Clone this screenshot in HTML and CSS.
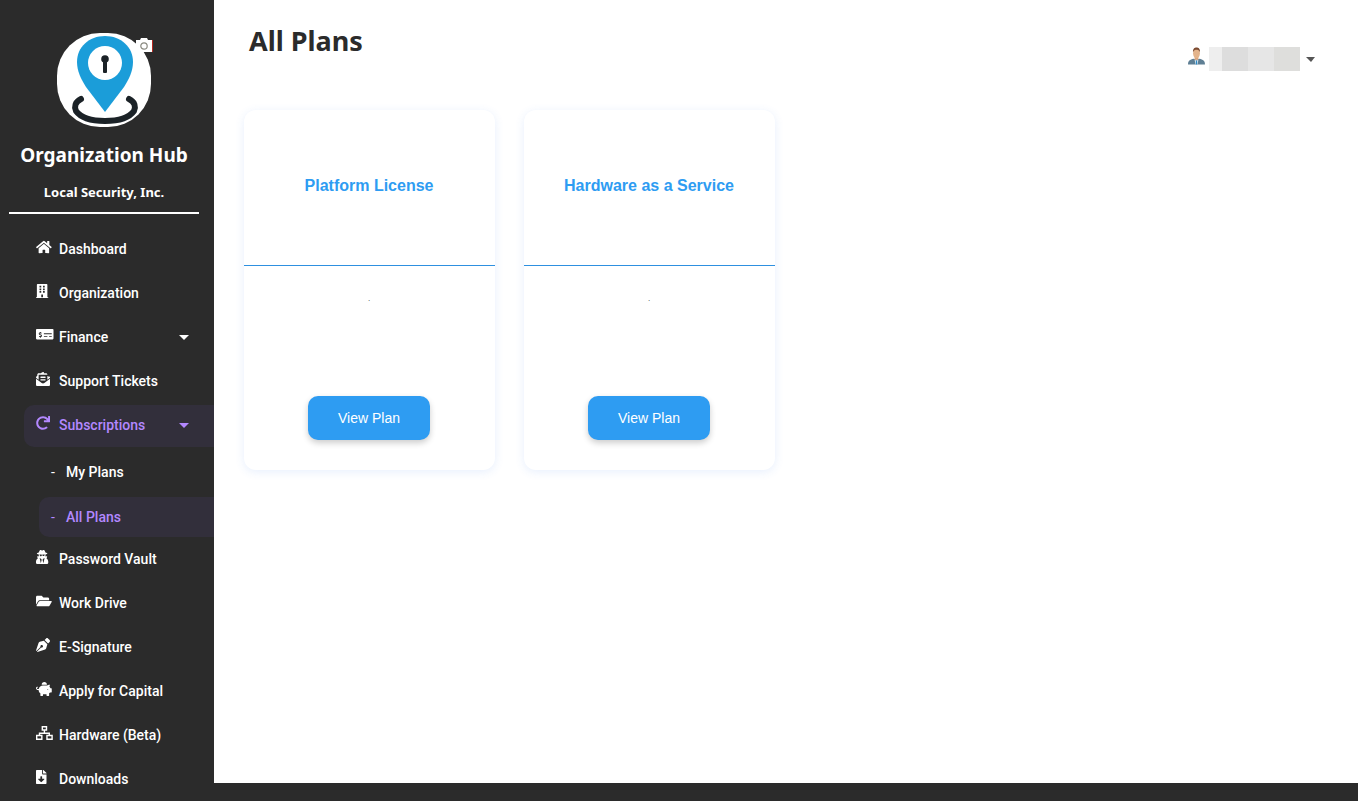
FILE: index.html
```html
<!DOCTYPE html>
<html lang="en">
<head>
<meta charset="utf-8">
<title>All Plans</title>
<link rel="stylesheet" href="styles.css">
</head>
<body>
<div class="app">
  <aside class="sidebar">
    <div class="brand">
      <div class="logo-wrap">
        <svg class="logo" viewBox="0 0 94 94">
          <rect width="94" height="94" rx="43" fill="#fff"/>
          <path d="M24 66C18 69 17 74 19 78C24 85 36 88 48 88C60 88 72 85 77 78C79 74 78 69 72 66" fill="none" stroke="#1b2227" stroke-width="6" stroke-linecap="round"/>
          <path d="M48 3C64 3 76 14 76 29C76 38 72 46 67 54L48 79L29 54C24 46 20 38 20 29C20 14 32 3 48 3Z" fill="#1b9dd9"/>
          <circle cx="48" cy="30" r="17" fill="#fff"/>
          <circle cx="48" cy="26" r="3.800" fill="#1b2227"/>
          <rect x="46" y="27" width="4" height="13" rx="1" fill="#1b2227"/>
        </svg>
        <svg class="camera" viewBox="0 0 17 14">
          <path d="M0 2h4l1-2h6l1 2h5v12H0z" fill="#fff"/>
          <rect x="16" y="2" width="1" height="12" fill="#b3261e"/>
          <circle cx="8" cy="8" r="3.200" fill="#fff" stroke="#8a8a80" stroke-width="1.200"/>
        </svg>
      </div>
      <div class="brand-name">Organization Hub</div>
      <div class="brand-org">Local Security, Inc.</div>
    </div>
    <nav class="nav">
      <a class="nav-item">
        <svg class="ico" preserveAspectRatio="xMinYMid meet" viewBox="0 0 576 512"><path d="M280.370 148.260L96 300.110V464a16 16 0 0 0 16 16l112.060-.29a16 16 0 0 0 15.920-16V368a16 16 0 0 1 16-16h64a16 16 0 0 1 16 16v95.640a16 16 0 0 0 16 16.050L464 480a16 16 0 0 0 16-16V300L295.670 148.260a12.190 12.190 0 0 0-15.300 0zM571.600 251.470L488 182.560V44.050a12 12 0 0 0-12-12h-56a12 12 0 0 0-12 12v72.610L318.470 43a48 48 0 0 0-61 0L4.340 251.470a12 12 0 0 0-1.600 16.900l25.500 31A12 12 0 0 0 45.150 301l235.220-193.740a12.190 12.190 0 0 1 15.300 0L530.900 301a12 12 0 0 0 16.900-1.600l25.500-31a12 12 0 0 0-1.700-16.930z"/></svg>
        <span>Dashboard</span>
      </a>
      <a class="nav-item">
        <svg class="ico" preserveAspectRatio="xMinYMid meet" viewBox="0 0 448 512"><path d="M436 480h-20V24c0-13.255-10.745-24-24-24H56C42.745 0 32 10.745 32 24v456H12c-6.627 0-12 5.373-12 12v20h448v-20c0-6.627-5.373-12-12-12zM128 76c0-6.627 5.373-12 12-12h40c6.627 0 12 5.373 12 12v40c0 6.627-5.373 12-12 12h-40c-6.627 0-12-5.373-12-12V76zm0 96c0-6.627 5.373-12 12-12h40c6.627 0 12 5.373 12 12v40c0 6.627-5.373 12-12 12h-40c-6.627 0-12-5.373-12-12v-40zm52 148h-40c-6.627 0-12-5.373-12-12v-40c0-6.627 5.373-12 12-12h40c6.627 0 12 5.373 12 12v40c0 6.627-5.373 12-12 12zm76 160h-64v-84c0-6.627 5.373-12 12-12h40c6.627 0 12 5.373 12 12v84zm64-172c0 6.627-5.373 12-12 12h-40c-6.627 0-12-5.373-12-12v-40c0-6.627 5.373-12 12-12h40c6.627 0 12 5.373 12 12v40zm0-96c0 6.627-5.373 12-12 12h-40c-6.627 0-12-5.373-12-12v-40c0-6.627 5.373-12 12-12h40c6.627 0 12 5.373 12 12v40zm0-96c0 6.627-5.373 12-12 12h-40c-6.627 0-12-5.373-12-12V76c0-6.627 5.373-12 12-12h40c6.627 0 12 5.373 12 12v40z"/></svg>
        <span>Organization</span>
      </a>
      <a class="nav-item">
        <svg class="ico" preserveAspectRatio="xMinYMid meet" viewBox="0 0 640 512"><path d="M608 32H32C14.330 32 0 46.330 0 64v320c0 17.670 14.330 32 32 32h576c17.670 0 32-14.330 32-32V64c0-17.670-14.330-32-32-32zM176 327.880V344c0 4.420-3.580 8-8 8h-16c-4.420 0-8-3.580-8-8v-16.300c-11.290-.58-22.270-4.520-31.370-11.350-3.900-2.930-4.100-8.770-.57-12.140l11.750-11.210c2.770-2.640 6.890-2.760 10.130-.73 3.870 2.420 8.260 3.720 12.820 3.720h28.110c6.500 0 11.800-5.920 11.800-13.190 0-5.950-3.610-11.190-8.770-12.730l-45-13.500c-18.590-5.580-31.580-23.420-31.580-43.390 0-24.520 19.050-44.440 42.670-45.070V152c0-4.420 3.580-8 8-8h16c4.420 0 8 3.580 8 8v16.300c11.290.58 22.270 4.510 31.370 11.350 3.900 2.930 4.100 8.770.57 12.140l-11.750 11.210c-2.770 2.640-6.890 2.760-10.130.73-3.870-2.430-8.260-3.720-12.820-3.720h-28.110c-6.500 0-11.800 5.920-11.800 13.190 0 5.950 3.610 11.190 8.770 12.730l45 13.500c18.590 5.580 31.580 23.420 31.580 43.390 0 24.530-19.050 44.440-42.670 45.070zM416 312c0 4.420-3.580 8-8 8H296c-4.420 0-8-3.580-8-8v-16c0-4.420 3.580-8 8-8h112c4.420 0 8 3.580 8 8v16zm160 0c0 4.420-3.580 8-8 8h-80c-4.420 0-8-3.580-8-8v-16c0-4.420 3.580-8 8-8h80c4.420 0 8 3.580 8 8v16zm0-96c0 4.420-3.580 8-8 8H296c-4.420 0-8-3.580-8-8v-16c0-4.420 3.580-8 8-8h272c4.420 0 8 3.580 8 8v16z"/></svg>
        <span class="grow">Finance</span>
        <i class="caret"></i>
      </a>
      <a class="nav-item">
        <svg class="ico" preserveAspectRatio="xMinYMid meet" viewBox="0 0 512 512"><path d="M176 216h160c8.840 0 16-7.160 16-16v-16c0-8.840-7.160-16-16-16H176c-8.840 0-16 7.160-16 16v16c0 8.840 7.160 16 16 16zm-16 80c0 8.840 7.160 16 16 16h160c8.840 0 16-7.160 16-16v-16c0-8.840-7.160-16-16-16H176c-8.840 0-16 7.160-16 16v16zm96 121.130c-16.420 0-32.840-5.060-46.860-15.190L0 250.860V464c0 26.510 21.490 48 48 48h416c26.510 0 48-21.490 48-48V250.860L302.860 401.940c-14.020 10.120-30.440 15.190-46.860 15.190zm189.870-254.800c-8.850-6.940-17.240-13.470-29.870-23V96c0-26.510-21.490-48-48-48h-77.550c-3.040-2.200-5.870-4.260-9.040-6.560C312.600 29.170 279.200-.35 256 0c-23.200-.35-56.590 29.170-73.410 41.440-3.170 2.300-6 4.360-9.040 6.560H96c-26.510 0-48 21.490-48 48v43.330c-12.630 9.520-21.020 16.060-29.870 23C6.670 171.420 0 185.190 0 199.720v10.650l96 69.350V96h320v183.720l96-69.350v-10.650c0-14.530-6.670-28.300-18.130-37.390z"/></svg>
        <span>Support Tickets</span>
      </a>
      <a class="nav-item active">
        <svg class="ico" preserveAspectRatio="xMinYMid meet" viewBox="0 0 512 512"><path d="M500.330 0h-47.410a12 12 0 0 0-12 12.570l4 82.760A247.420 247.420 0 0 0 256 8C119.340 8 7.900 119.530 8 256.190 8.100 393.070 119.100 504 256 504a247.100 247.100 0 0 0 166.180-63.910 12 12 0 0 0 .48-17.430l-34-34a12 12 0 0 0-16.380-.55A176 176 0 1 1 402.100 157.800l-101.530-4.870a12 12 0 0 0-12.570 12v47.410a12 12 0 0 0 12 12h200.330a12 12 0 0 0 12-12V12a12 12 0 0 0-12-12z"/></svg>
        <span class="grow">Subscriptions</span>
        <i class="caret"></i>
      </a>
      <a class="sub-item"><span class="dash">-</span><span>My Plans</span></a>
      <a class="sub-item active"><span class="dash">-</span><span>All Plans</span></a>
      <a class="nav-item">
        <svg class="ico" preserveAspectRatio="xMinYMid meet" viewBox="0 0 448 512"><path d="M383.900 308.300l23.900-62.600c4-10.500-3.700-21.700-15-21.700h-58.500c11-18.900 17.800-40.600 17.800-64v-.3c39.200-7.800 64-19.100 64-31.700 0-13.300-27.300-25.100-70.100-33-9.200-32.800-27-65.800-40.600-82.800-9.500-11.900-25.900-15.600-39.500-8.800l-27.600 13.800c-9 4.500-19.600 4.500-28.600 0L182.100 3.400c-13.600-6.800-30-3.100-39.500 8.800-13.500 17-31.400 50-40.600 82.800-42.700 7.900-70 19.700-70 33 0 12.600 24.800 23.900 64 31.700v.3c0 23.400 6.800 45.100 17.800 64H56.300c-11.500 0-19.200 11.700-14.700 22.300l25.800 60.200C27.300 329.800 0 372.700 0 422.400v44.800C0 491.900 20.100 512 44.800 512h358.400c24.700 0 44.800-20.100 44.800-44.800v-44.800c0-48.400-25.800-90.400-64.100-114.100zM176 480l-41.600-192 49.600 32 24 40-32 120zm96 0l-32-120 24-40 49.600-32L272 480zm41.700-298.500c-3.900 11.900-7 24.600-16.500 33.400-10.100 9.300-48 22.400-64-25-2.800-8.400-15.400-8.400-18.300 0-17 50.200-56 32.400-64 25-9.500-8.800-12.700-21.500-16.500-33.400-.8-2.500-6.300-5.700-6.300-5.800v-10.800c28.300 3.600 61 5.800 96 5.800s67.700-2.200 96-5.800v10.800c-.1.100-5.600 3.200-6.400 5.800z"/></svg>
        <span>Password Vault</span>
      </a>
      <a class="nav-item">
        <svg class="ico" preserveAspectRatio="xMinYMid meet" viewBox="0 0 576 512"><path d="M572.694 292.093L500.270 416.248A63.997 63.997 0 0 1 444.989 448H45.025c-18.523 0-30.064-20.093-20.731-36.093l72.424-124.155A64 64 0 0 1 152 256h399.964c18.523 0 30.064 20.093 20.730 36.093zM152 224h328v-48c0-26.510-21.490-48-48-48H272l-64-64H48C21.490 64 0 85.490 0 112v278.046l69.077-118.418C86.214 242.250 117.989 224 152 224z"/></svg>
        <span>Work Drive</span>
      </a>
      <a class="nav-item">
        <svg class="ico" preserveAspectRatio="xMinYMid meet" viewBox="0 0 512 512"><path d="M136.600 138.790a64.003 64.003 0 0 0-43.310 41.350L0 460l14.690 14.690L164.800 324.580c-2.990-6.260-4.800-13.180-4.800-20.580 0-26.510 21.490-48 48-48s48 21.490 48 48-21.490 48-48 48c-7.400 0-14.320-1.810-20.580-4.800L37.310 497.310 52 512l279.860-93.290a64.003 64.003 0 0 0 41.350-43.310L416 224 288 96l-151.400 42.790zm361.340-64.620l-60.110-60.110c-18.750-18.750-49.160-18.750-67.910 0l-56.550 56.550 128.020 128.020 56.550-56.550c18.750-18.750 18.750-49.150 0-67.910z"/></svg>
        <span>E-Signature</span>
      </a>
      <a class="nav-item">
        <svg class="ico" preserveAspectRatio="xMinYMid meet" viewBox="0 0 576 512"><path d="M560 224h-29.500c-8.800-20-21.600-37.700-37.400-52.500L512 96h-32c-29.400 0-55.400 13.500-73 34.300-7.600-1.100-15.100-2.300-23-2.300H256c-77.400 0-141.900 55-156.800 128H56c-14.800 0-26.500-13.500-23.500-28.800C34.700 215.800 45.400 208 57 208h1c3.300 0 6-2.700 6-6v-20c0-3.300-2.700-6-6-6-28.500 0-53.900 20.400-57.500 48.600C-3.900 258.800 22.700 288 56 288h40c0 52.200 25.400 98.100 64 127.300V496c0 8.800 7.200 16 16 16h64c8.800 0 16-7.200 16-16v-48h128v48c0 8.800 7.200 16 16 16h64c8.800 0 16-7.200 16-16v-80.700c11.800-8.900 22.300-19.400 31.300-31.300H560c8.800 0 16-7.200 16-16V240c0-8.800-7.200-16-16-16zm-128 64c-8.800 0-16-7.200-16-16s7.200-16 16-16 16 7.200 16 16-7.200 16-16 16zM256 96h128c5.400 0 10.700.4 15.900.8 0-.3.100-.5.100-.8 0-53-43-96-96-96s-96 43-96 96c0 2.100.5 4.100.6 6.200 15.200-3.900 31-6.200 47.400-6.200z"/></svg>
        <span>Apply for Capital</span>
      </a>
      <a class="nav-item">
        <svg class="ico" preserveAspectRatio="xMinYMid meet" viewBox="0 0 18 15"><path fill-rule="evenodd" d="M6 0h6v5H6zM7.500 1.500v2h3v-2zM8.250 5h1.500v2h-1.500zM3 7h12v1.500H3zM3 8.500h1.500v1H3zM13.500 8.500H15v1h-1.500zM0 9.500h7V15H0zM1.500 11v2.500h4V11zM11 9.500h7V15h-7zM12.500 11v2.500h4V11z"/></svg>
        <span>Hardware (Beta)</span>
      </a>
      <a class="nav-item">
        <svg class="ico" preserveAspectRatio="xMinYMid meet" viewBox="0 0 384 512"><path d="M224 136V0H24C10.700 0 0 10.700 0 24v464c0 13.300 10.700 24 24 24h336c13.300 0 24-10.700 24-24V160H248c-13.200 0-24-10.800-24-24zm76.450 211.360l-96.420 95.700c-6.650 6.610-17.390 6.610-24.040 0l-96.420-95.700C73.420 337.290 80.540 320 94.820 320H160v-80c0-8.840 7.160-16 16-16h32c8.840 0 16 7.160 16 16v80h65.180c14.280 0 21.400 17.290 11.270 27.360zM377 105L279.100 7c-4.500-4.500-10.600-7-17-7H256v128h128v-6.100c0-6.300-2.500-12.400-7-16.900z"/></svg>
        <span>Downloads</span>
      </a>
    </nav>
  </aside>
  <div class="content">
    <main class="main">
      <header class="topbar">
        <h1 class="page-title">All Plans</h1>
        <div class="user">
          <svg class="avatar" viewBox="0 0 18 18">
            <path d="M0 18c0-4 2-5 6-6l3 1 3-1c4 1 6 2 6 6z" fill="#5f7f94"/>
            <path d="M7 13l2 1 2-1-1 5H8z" fill="#e8f0f4"/>
            <rect x="8.300" y="14" width="1.400" height="4" fill="#2a8ac8"/>
            <rect x="7" y="9" width="4" height="4" fill="#dca57c"/>
            <ellipse cx="9" cy="6" rx="3.600" ry="5" fill="#e3b48c"/>
            <path d="M5.300 5C5 1.500 7 0 9 0s4 1.500 3.700 5C12 3 10.500 2.500 9 2.500S6 3 5.300 5z" fill="#7c4a30"/>
          </svg>
          <div class="user-name">
            <span class="blur b1"></span><span class="blur b2"></span><span class="blur b3"></span><span class="blur b4"></span>
          </div>
          <i class="caret caret-user"></i>
        </div>
      </header>
      <section class="cards">
        <article class="card">
          <div class="card-head"><h2 class="card-title">Platform License</h2></div>
          <div class="card-body">
            <p class="card-text">.</p>
            <button class="btn">View Plan</button>
          </div>
        </article>
        <article class="card">
          <div class="card-head"><h2 class="card-title">Hardware as a Service</h2></div>
          <div class="card-body">
            <p class="card-text">.</p>
            <button class="btn">View Plan</button>
          </div>
        </article>
      </section>
    </main>
    <footer class="footer"></footer>
  </div>
</div>
</body>
</html>
```
FILE: styles.css
```css
* { box-sizing: border-box; }
html, body { margin: 0; height: 100%; overflow: hidden; }
body { background: #fff; font-family: "Liberation Sans", Arial, sans-serif; }
.app { display: flex; height: 801px; }

.sidebar { width: 214px; flex: none; background: #2b2b2b; color: #fff; display: flex; flex-direction: column; overflow: hidden; }
.brand { width: 190px; margin-left: 9px; padding-top: 33px; height: 214px; border-bottom: 2px solid #fff; display: flex; flex-direction: column; align-items: center; }
.logo-wrap { position: relative; width: 94px; height: 94px; }
.logo { width: 94px; height: 94px; display: block; }
.camera { position: absolute; left: 79px; top: 5px; width: 17px; height: 14px; }
.brand-name { margin-top: 14px; font: 700 19px/28px "Noto Sans", sans-serif; white-space: nowrap; }
.brand-org { margin-top: 14px; font: 700 13px/18px "Noto Sans", sans-serif; white-space: nowrap; }

.nav { display: flex; flex-direction: column; padding-top: 13px; font-family: Roboto, sans-serif; font-weight: 500; font-size: 14px; }
.nav-item { display: flex; align-items: center; height: 42px; margin-top: 2px; margin-left: 24px; padding: 0 25px 2px 12px; border-radius: 10px 0 0 10px; color: #fff; }
.nav-item.active, .sub-item.active { background: #322f3b; color: #b388ff; }
.ico { width: 23px; height: 14px; flex: none; fill: currentColor; margin-bottom: 4px; }
.grow { flex: 1; }
.caret { width: 0; height: 0; border-left: 5px solid transparent; border-right: 5px solid transparent; border-top: 5px solid currentColor; }
.sub-item { display: flex; align-items: center; height: 40px; margin: 5px 0 0 39px; padding-left: 12px; border-radius: 10px 0 0 10px; color: #fff; }
.dash { width: 15px; flex: none; font-weight: 400; }

.content { flex: 1; display: flex; flex-direction: column; min-width: 0; }
.main { flex: 1; padding: 0 43px 0 30px; }
.footer { height: 18px; background: #2b2b2b; }
.topbar { display: flex; justify-content: space-between; height: 110px; }
.page-title { margin: 22px 0 0 5px; font: 700 27px/38px "Noto Sans", sans-serif; color: #2b2b2b; }
.user { display: flex; align-items: center; height: 24px; margin-top: 47px; color: #555; }
.avatar { width: 17px; height: 18px; margin: 0 4px 6px 0; }
.user-name { display: flex; width: 91px; height: 24px; margin-right: 6px; }
.blur { display: block; height: 24px; }
.b1 { width: 13px; background: #eee; }
.b2 { width: 26px; background: #ddd; }
.b3 { width: 26px; background: #e6e6e6; }
.b4 { width: 26px; background: #dededc; }
.caret-user { border-left-width: 5px; border-right-width: 4px; }

.cards { display: flex; gap: 29px; }
.card { width: 251px; height: 360px; background: #fff; border-radius: 12px; box-shadow: 0 2px 10px rgba(60,120,240,.12); display: flex; flex-direction: column; }
.card-head { height: 156px; border-bottom: 1px solid #2e90e0; display: flex; align-items: center; justify-content: center; padding: 0 1px 3px 0; }
.card-title { margin: 0; font: 700 16px/20px "Liberation Sans", Arial, sans-serif; color: #2e9cf2; }
.card-body { flex: 1; display: flex; flex-direction: column; align-items: center; padding-right: 1px; }
.card-text { margin: 27px 0 0; font-size: 8px; line-height: 12px; color: #333; height: 103px; }
.btn { width: 122px; height: 44px; flex: none; border: 0; border-radius: 10px; background: #2e9cf2; color: #fff; font: 400 14px "Liberation Sans", Arial, sans-serif; box-shadow: 0 3px 6px rgba(0,0,0,.2); }
```
